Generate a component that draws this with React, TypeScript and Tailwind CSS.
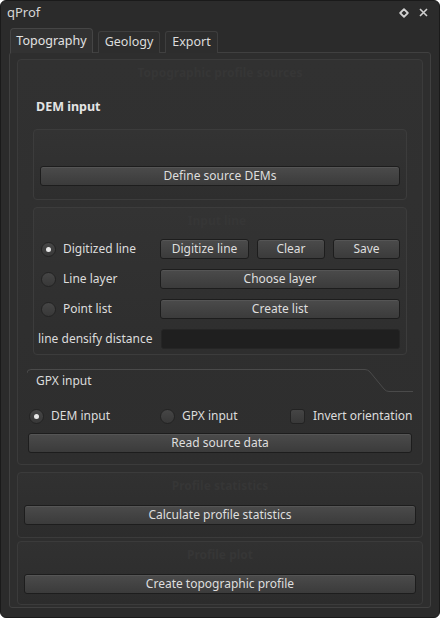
import React from "react";

const FONT = { fontFamily: '"Noto Sans", "Open Sans", sans-serif' };

function Btn({ label, className = "" }: { label: string; className?: string }) {
  return (
    <div
      className={`h-[20px] flex items-center justify-center rounded-[3px] border border-[#1d1d1d] bg-gradient-to-b from-[#4b4b4b] to-[#3b3b3b] shadow-[inset_0_1px_0_#555] text-[12px] text-[#dedede] whitespace-nowrap ${className}`}
    >
      {label}
    </div>
  );
}

function Radio({ checked = false }: { checked?: boolean }) {
  return (
    <div className="w-[15px] h-[15px] shrink-0 rounded-full border border-[#232323] bg-gradient-to-b from-[#464646] to-[#383838] flex items-center justify-center">
      {checked && <div className="w-[5px] h-[5px] rounded-full bg-[#e8e8e8]" />}
    </div>
  );
}

function GroupTitle({ text }: { text: string }) {
  return (
    <div className="h-[26px] flex items-center justify-center text-[12px] font-bold text-[#363636]">
      {text}
    </div>
  );
}

export default function App() {
  return (
    <div className="w-[440px] h-[621px] bg-white text-[12px]" style={FONT}>
      <div className="h-[618px] rounded-[6px] border border-[#1a1a1a] bg-[#2b2b2b] flex flex-col">
        {/* Title bar */}
        <div className="h-[23px] flex items-center justify-between pl-[6px] pr-[11px]">
          <span className="text-[13px] text-[#d6d6d6]">qProf</span>
          <div className="flex items-center gap-[10px]">
            <svg width="10" height="10" viewBox="0 0 10 10">
              <path d="M5 1.2 L8.8 5 L5 8.8 L1.2 5 Z" fill="none" stroke="#d0d0d0" strokeWidth="1.8" strokeLinejoin="round" />
            </svg>
            <svg width="9" height="9" viewBox="0 0 9 9">
              <path d="M1 1 L8 8 M8 1 L1 8" stroke="#d0d0d0" strokeWidth="1.6" />
            </svg>
          </div>
        </div>

        {/* Tabs */}
        <div className="mt-[4px] h-[25px] flex items-end pl-[9px] gap-[5px] relative z-10">
          <div className="h-[25px] w-[83px] rounded-t-[4px] border border-b-0 border-[#454545] bg-[#323232] flex items-center justify-center text-[12.5px] text-[#e2e2e2]">
            Topography
          </div>
          <div className="h-[22px] w-[62px] rounded-t-[3px] border border-b-0 border-[#3e3e3e] bg-[#2d2d2d] flex items-center justify-center text-[12.5px] text-[#dcdcdc]">
            Geology
          </div>
          <div className="h-[22px] w-[53px] rounded-t-[3px] border border-b-0 border-[#3e3e3e] bg-[#2d2d2d] flex items-center justify-center text-[12.5px] text-[#dcdcdc]">
            Export
          </div>
        </div>

        {/* Tab pane */}
        <div className="ml-[8px] mt-[-1px] w-[422px] h-[556px] rounded-[3px] border border-[#404040] bg-[#2e2e2e] pl-[7px] pt-[6px] flex flex-col">
          {/* Topographic profile sources */}
          <div className="w-[406px] h-[406px] rounded-[4px] border border-[#3b3b3b] bg-gradient-to-b from-[#313131] to-[#2e2e2e] flex flex-col">
            <GroupTitle text="Topographic profile sources" />
            <div className="mt-[12px] h-[18px] pl-[18px] flex items-center text-[12.5px] font-bold text-[#e4e4e4]">
              DEM input
            </div>

            <div className="mt-[13px] ml-[15px] w-[374px] h-[71px] rounded-[4px] border border-[#3c3c3c] bg-gradient-to-b from-[#333333] to-[#2e2e2e] pt-[36px] px-[6px]">
              <Btn label="Define source DEMs" />
            </div>

            <div className="mt-[7px] ml-[15px] w-[374px] h-[148px] rounded-[4px] border border-[#3c3c3c] bg-gradient-to-b from-[#333333] to-[#2e2e2e] flex flex-col pr-[6px]">
              <GroupTitle text="Input line" />
              <div className="mt-[5px] flex flex-col gap-[10px]">
                <div className="h-[20px] flex items-center pl-[7px]">
                  <div className="w-[119px] flex items-center gap-[7px]">
                    <Radio checked />
                    <span className="text-[12px] text-[#dcdcdc]">Digitized line</span>
                  </div>
                  <Btn label="Digitize line" className="w-[89px]" />
                  <Btn label="Clear" className="w-[68px] ml-[8px]" />
                  <Btn label="Save" className="w-[67px] ml-[8px]" />
                </div>
                <div className="h-[20px] flex items-center pl-[7px]">
                  <div className="w-[119px] flex items-center gap-[7px]">
                    <Radio />
                    <span className="text-[12px] text-[#dcdcdc]">Line layer</span>
                  </div>
                  <Btn label="Choose layer" className="flex-1" />
                </div>
                <div className="h-[20px] flex items-center pl-[7px]">
                  <div className="w-[119px] flex items-center gap-[7px]">
                    <Radio />
                    <span className="text-[12px] text-[#dcdcdc]">Point list</span>
                  </div>
                  <Btn label="Create list" className="flex-1" />
                </div>
                <div className="h-[20px] flex items-center pl-[4px]">
                  <span className="w-[123px] whitespace-nowrap text-[12px] text-[#dcdcdc]">line densify distance</span>
                  <div className="flex-1 h-[20px] rounded-[3px] border border-[#252525] bg-[#1f1f1f]" />
                </div>
              </div>
            </div>

            {/* GPX input tab */}
            <div className="relative mt-[14px] ml-[9px] w-[387px] h-[24px] flex items-center pl-[9px] text-[12px] text-[#dcdcdc]">
              <svg className="absolute left-0 top-0" width="387" height="24" viewBox="0 0 387 24">
                <path
                  d="M0 4 Q0 0.5 4 0.5 H338 Q341 0.5 343 3 L357 20 Q359 22.5 362 22.5 H386"
                  fill="none"
                  stroke="#4a4a4a"
                  strokeWidth="1"
                />
              </svg>
              <span className="relative">GPX input</span>
            </div>

            <div className="mt-[14px] ml-[11px] h-[18px] flex items-center text-[12px] text-[#dcdcdc]">
              <div className="w-[131px] flex items-center gap-[7px]">
                <Radio checked />
                <span>DEM input</span>
              </div>
              <div className="w-[130px] flex items-center gap-[7px]">
                <Radio />
                <span>GPX input</span>
              </div>
              <div className="flex items-center gap-[8px]">
                <div className="w-[15px] h-[15px] rounded-[3px] border border-[#232323] bg-gradient-to-b from-[#454545] to-[#383838]" />
                <span>Invert orientation</span>
              </div>
            </div>

            <div className="mt-[8px] mx-[10px]">
              <Btn label="Read source data" />
            </div>
          </div>

          {/* Profile statistics */}
          <div className="mt-[7px] w-[406px] h-[66px] rounded-[4px] border border-[#3b3b3b] bg-gradient-to-b from-[#313131] to-[#2c2c2c] flex flex-col">
            <GroupTitle text="Profile statistics" />
            <div className="mt-[6px] mx-[6px]">
              <Btn label="Calculate profile statistics" />
            </div>
          </div>

          {/* Profile plot */}
          <div className="mt-[3px] w-[406px] h-[64px] rounded-[4px] border border-[#3b3b3b] bg-gradient-to-b from-[#313131] to-[#2c2c2c] flex flex-col">
            <GroupTitle text="Profile plot" />
            <div className="mt-[6px] mx-[6px]">
              <Btn label="Create topographic profile" />
            </div>
          </div>
        </div>
      </div>
    </div>
  );
}
